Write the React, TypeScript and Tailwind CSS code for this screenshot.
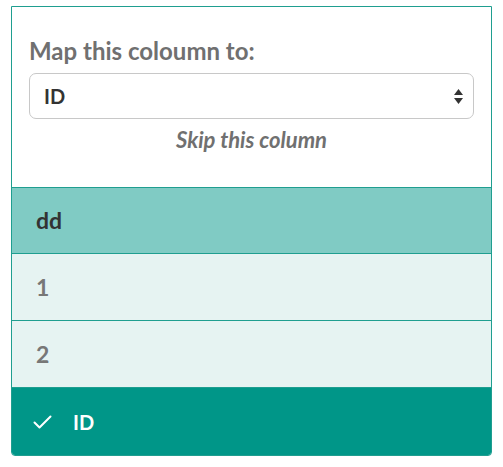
import React from 'react'

const Check = () => (
  <svg width="19" height="14" viewBox="0 0 19 14" fill="none">
    <path d="M1.5 7.5 L6.5 12.5 L17.5 1.5" stroke="white" strokeWidth="2" strokeLinecap="round" strokeLinejoin="round" />
  </svg>
)

const Arrows = () => (
  <svg width="9" height="15" viewBox="0 0 9 15">
    <path d="M4.5 0 L9 6 L0 6 Z" fill="#333" />
    <path d="M0 9 L9 9 L4.5 15 Z" fill="#333" />
  </svg>
)

export default function App() {
  return (
    <div className="w-[503px] h-[467px] bg-white pt-[6px] px-[11px]" style={{ fontFamily: 'Lato, "Open Sans", sans-serif' }}>
      <div className="border border-[#1f9e90] rounded-b-[4px] overflow-hidden">
        <div className="h-[180px] bg-white px-[17px] pt-[29px]">
          <div className="text-[24px] leading-[29px] font-bold text-[#707070]">Map this coloumn to:</div>
          <div className="mt-[8px] h-[46px] border border-[#c8c8c8] rounded-[7px] flex items-center justify-between pl-[14px] pr-[10px]">
            <span className="text-[20px] font-bold text-[#333]">ID</span>
            <Arrows />
          </div>
          <div className="mt-[8px] text-center text-[22px] leading-[26px] italic font-bold text-[#707070]">Skip this column</div>
        </div>
        <div className="h-[66px] bg-[#80cbc4] border-t border-[#1f9e90] flex items-center pl-[24px]">
          <span className="text-[23px] font-bold text-[#333]">dd</span>
        </div>
        <div className="h-[67px] bg-[#e6f3f2] border-t border-[#1f9e90] flex items-center pl-[24px]">
          <span className="text-[23px] font-bold text-[#777]">1</span>
        </div>
        <div className="h-[67px] bg-[#e6f3f2] border-t border-[#1f9e90] flex items-center pl-[24px]">
          <span className="text-[23px] font-bold text-[#777]">2</span>
        </div>
        <div className="h-[68px] bg-[#009688] border-t border-[#1f9e90] flex items-center pl-[21px] gap-[21px]">
          <Check />
          <span className="text-[20px] font-bold text-white">ID</span>
        </div>
      </div>
    </div>
  )
}
